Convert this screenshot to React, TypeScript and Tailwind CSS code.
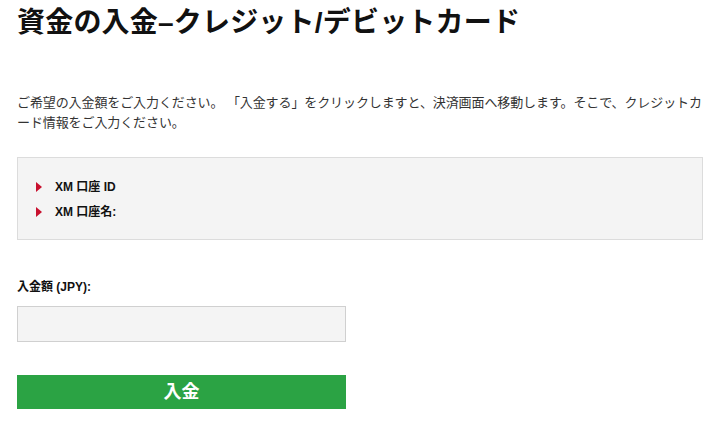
import React from "react";

function Tri() {
  return (
    <svg width="6" height="10" viewBox="0 0 6 10" className="shrink-0">
      <polygon points="0,0 6,5 0,10" fill="#c8102e" />
    </svg>
  );
}

export default function App() {
  const font = { fontFamily: '"Liberation Sans", "Noto Sans CJK JP", sans-serif' };
  return (
    <div className="w-[716px] h-[435px] bg-white overflow-hidden" style={font}>
      <div className="pl-[17px] w-[703px]">
        <h1 className="pt-[3px] text-[28px] leading-[40px] font-bold text-[#111] whitespace-nowrap tracking-[0.2px]">
          資金の入金–クレジット/デビットカード
        </h1>
        <p className="mt-[50px] text-[13px] leading-[20px] text-[#333] whitespace-nowrap tracking-[-0.1px]">
          ご希望の入金額をご入力ください。 「入金する」をクリックしますと、決済画面へ移動します。そこで、クレジットカ
          <br />
          ード情報をご入力ください。
        </p>
        <div className="mt-[24px] h-[83px] bg-[#f4f4f4] border border-[#dcdcdc] pt-[16px] pl-[18px]">
          <div className="flex items-center gap-[13px] h-[25px] text-[12px] font-bold text-[#111]">
            <Tri />
            <span>XM 口座 ID</span>
          </div>
          <div className="flex items-center gap-[13px] h-[25px] text-[12px] font-bold text-[#111]">
            <Tri />
            <span>XM 口座名:</span>
          </div>
        </div>
        <div className="mt-[37px] text-[12px] leading-[20px] font-bold text-[#111]">入金額 (JPY):</div>
        <input
          type="text"
          className="block mt-[9px] w-[329px] h-[36px] bg-[#f4f4f4] border border-[#d0d0d0] outline-none"
        />
        <button className="mt-[33px] w-[329px] h-[34px] bg-[#2ba344] text-white text-[18px] font-bold flex items-center justify-center">
          入金
        </button>
      </div>
    </div>
  );
}
